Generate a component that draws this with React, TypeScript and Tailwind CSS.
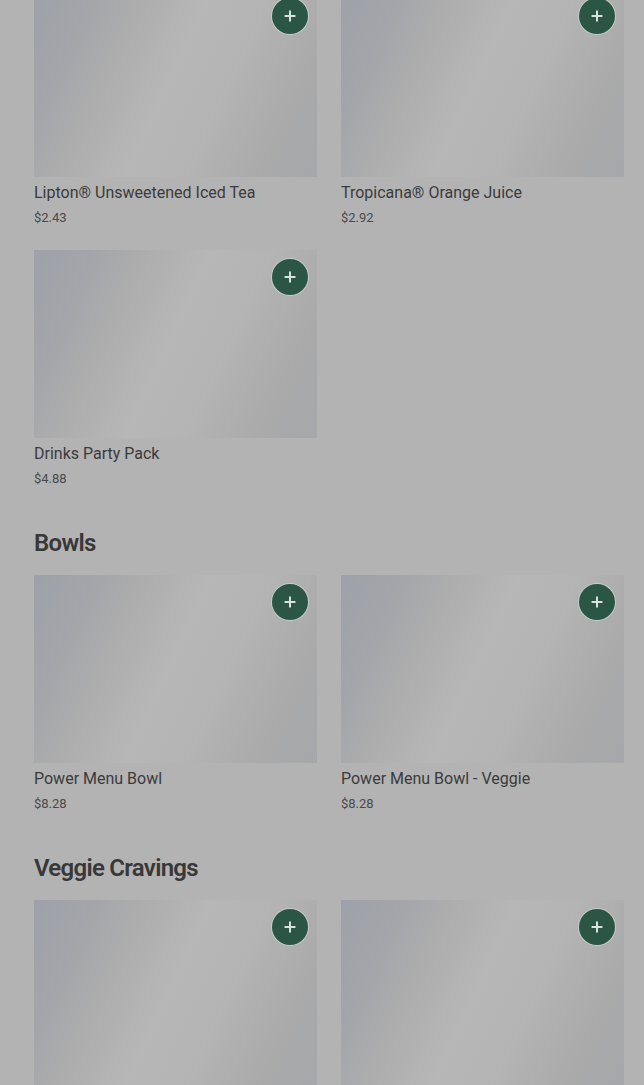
import { Plus } from 'lucide-react'

type Item = { id: string; name?: string; price?: string }

const sections: { title?: string; items: Item[] }[] = [
  {
    items: [
      { id: 'tea', name: 'Lipton® Unsweetened Iced Tea', price: '$2.43' },
      { id: 'oj', name: 'Tropicana® Orange Juice', price: '$2.92' },
      { id: 'pack', name: 'Drinks Party Pack', price: '$4.88' },
    ],
  },
  {
    title: 'Bowls',
    items: [
      { id: 'bowl', name: 'Power Menu Bowl', price: '$8.28' },
      { id: 'bowl-veg', name: 'Power Menu Bowl - Veggie', price: '$8.28' },
    ],
  },
  {
    title: 'Veggie Cravings',
    // names fall below the fold in this view
    items: [{ id: 'veg-1' }, { id: 'veg-2' }],
  },
]

function Card({ item }: { item: Item }) {
  return (
    <div>
      <div className="relative h-[188px] bg-[linear-gradient(115deg,#9ea1a9_0%,#a3a5aa_16%,#adadad_30%,#b7b7b7_48%,#b4b4b4_64%,#aaaaaa_84%,#a5a7ab_100%)]">
        <button className="absolute top-[9px] right-[9px] h-9 w-9 rounded-full bg-[#2b5646] ring-1 ring-[#c4ccc8] flex items-center justify-center">
          <Plus className="h-4 w-4 text-[#d9e2dd]" strokeWidth={3} />
        </button>
      </div>
      {item.name && (
        <>
          <p className="mt-[4px] text-[16px] leading-6 text-[#3b3b3b]">{item.name}</p>
          <p className="mt-[3px] text-[13px] leading-5 text-[#4a4a4a]">{item.price}</p>
        </>
      )}
    </div>
  )
}

export default function App() {
  return (
    <div className="h-[1085px] overflow-hidden bg-[#b3b3b3] font-['Roboto',sans-serif]">
      <div className="-mt-[11px] pl-[34px] pr-[20px]">
        {sections.map((s, i) => (
          <section key={i} className={i > 0 ? 'mt-[38px]' : ''}>
            {s.title && (
              <h2 className="mb-4 text-[24px] leading-8 font-semibold tracking-[-0.03em] text-[#383838]">
                {s.title}
              </h2>
            )}
            <div className="grid grid-cols-2 gap-x-6 gap-y-[22px]">
              {s.items.map((it) => (
                <Card key={it.id} item={it} />
              ))}
            </div>
          </section>
        ))}
      </div>
    </div>
  )
}
